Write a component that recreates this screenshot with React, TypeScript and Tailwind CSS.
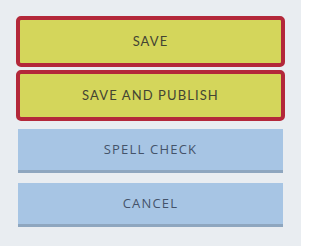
import React from 'react';

type Variant = 'primary' | 'secondary';

const variantClass: Record<Variant, string> = {
  primary:
    'h-[51px] mx-4 border-4 border-[#b3283a] rounded-[5px] bg-[#d4d65b] text-[#434433] font-["Lato",sans-serif] text-[13px] tracking-[1.1px]',
  secondary:
    'h-[44px] mx-[18px] border-b-[3px] border-[#8ea6bf] bg-[#a7c5e4] text-[#44536a] font-["Open_Sans",sans-serif] text-[13px] tracking-[1.2px]',
};

const buttons: { label: string; variant: Variant }[] = [
  { label: 'SAVE', variant: 'primary' },
  { label: 'SAVE AND PUBLISH', variant: 'primary' },
  { label: 'SPELL CHECK', variant: 'secondary' },
  { label: 'CANCEL', variant: 'secondary' },
];

export default function App() {
  return (
    <div className="w-[301px] h-[246px] bg-[#e9edf1] pt-4 flex flex-col">
      {buttons.map((b, i) => (
        <button
          key={b.label}
          type="button"
          className={`flex items-center justify-center ${variantClass[b.variant]} ${
            i === 1 ? 'mt-[3px]' : i === 2 ? 'mt-2' : i === 3 ? 'mt-[10px]' : ''
          }`}
        >
          {b.label}
        </button>
      ))}
    </div>
  );
}
